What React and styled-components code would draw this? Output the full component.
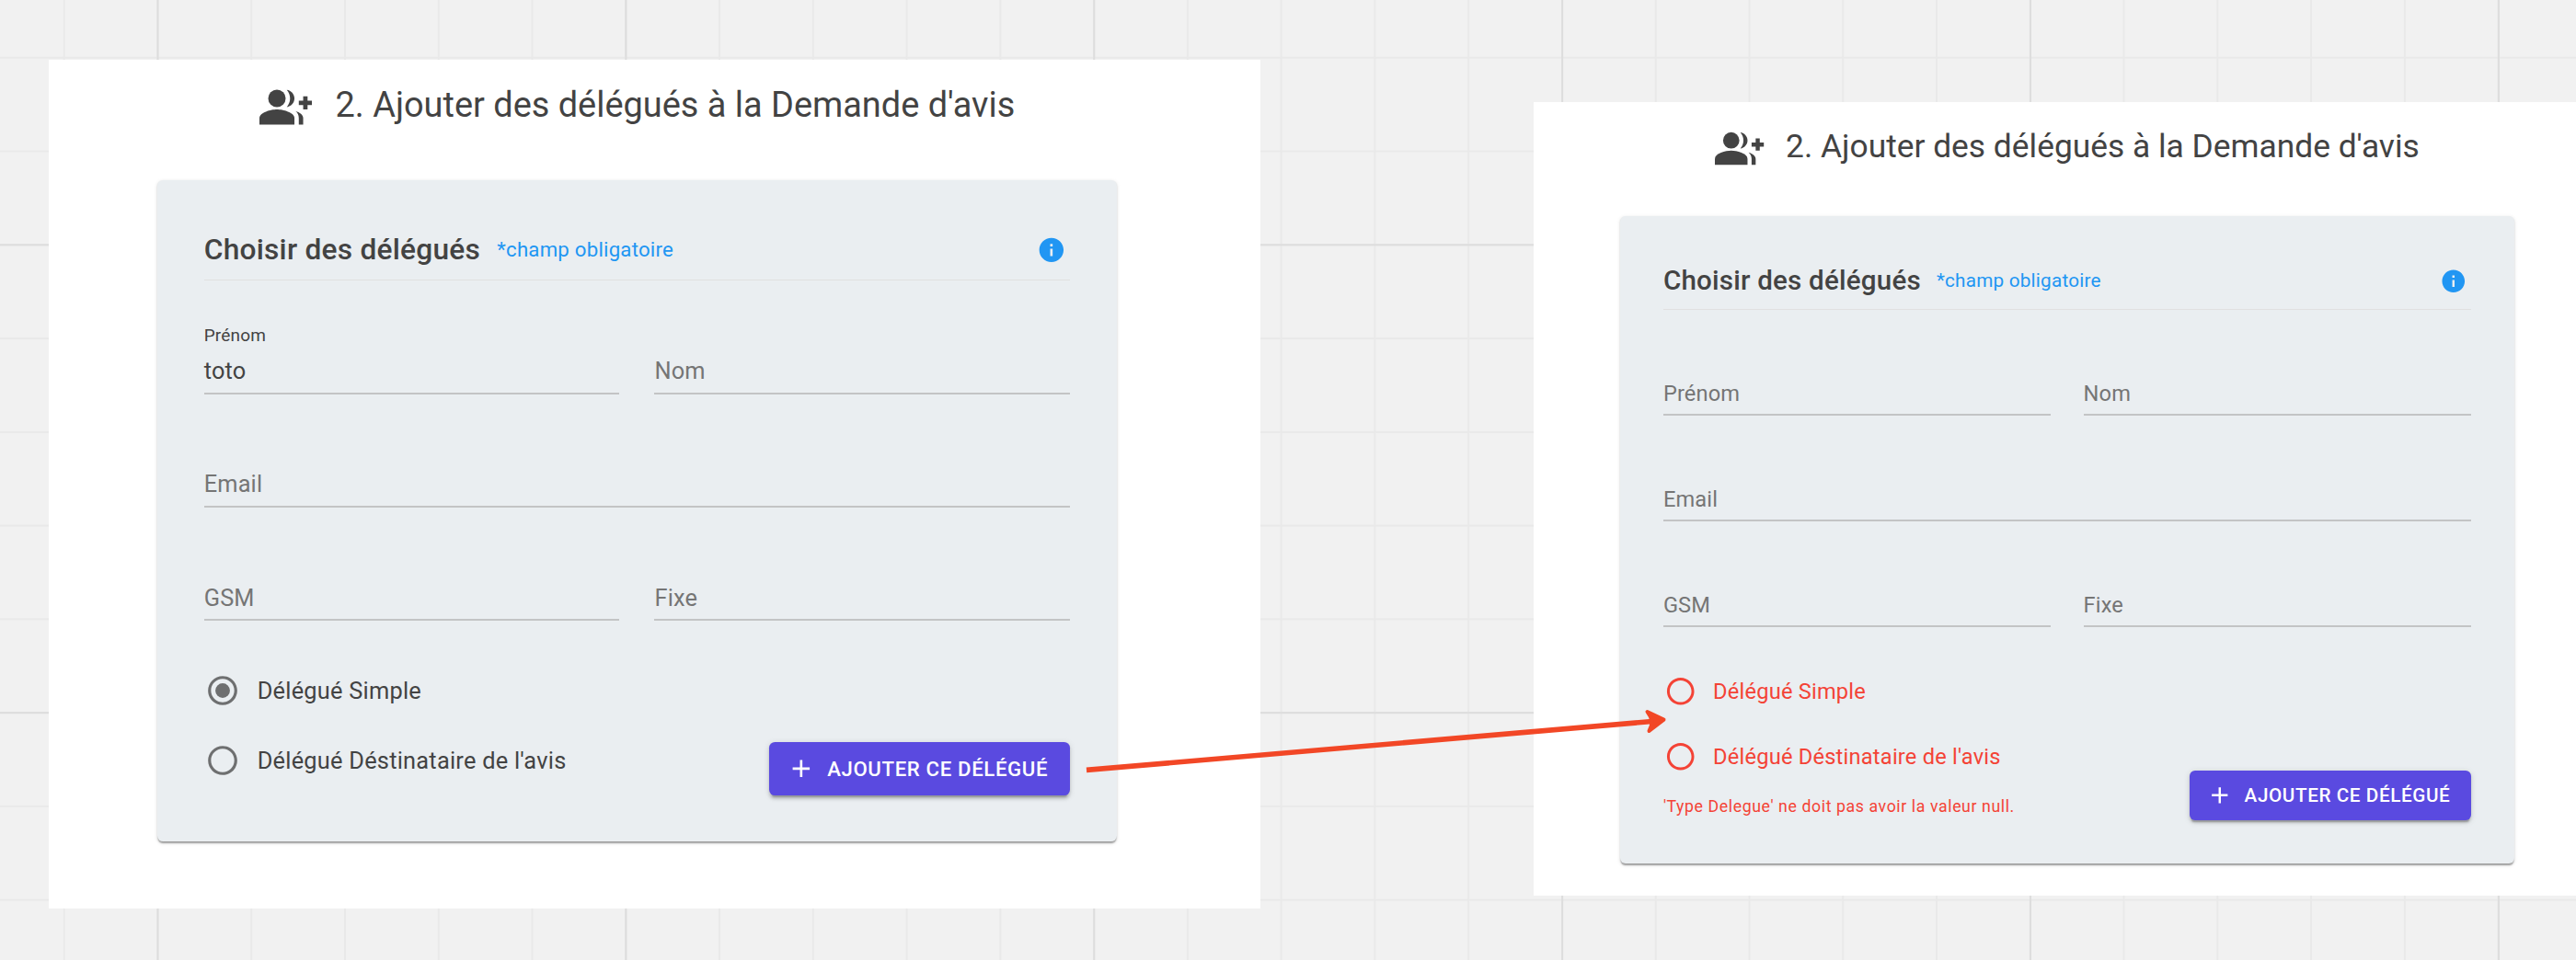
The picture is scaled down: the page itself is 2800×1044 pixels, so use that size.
import React from "react";
import styled, { createGlobalStyle, ThemeProvider, css } from "styled-components";

const u = (n) => ({ theme }) => `${(n * theme.unit).toFixed(3)}px`;

const GlobalStyle = createGlobalStyle`
  *, *::before, *::after { box-sizing: border-box; }
  html, body { margin: 0; padding: 0; }
  body {
    font-family: Roboto, "Liberation Sans", sans-serif;
    color: #434343;
    background: #f1f1f1;
    overflow: hidden;
  }
`;

const Board = styled.main`
  position: relative;
  display: flex;
  align-items: flex-start;
  width: 2800px;
  height: 1044px;
  overflow: hidden;
  background-color: #f1f1f1;
  background-image:
    linear-gradient(to right, #dddddd 2px, transparent 2px),
    linear-gradient(to bottom, #dddddd 2px, transparent 2px),
    linear-gradient(to right, #e9e9e9 2px, transparent 2px),
    linear-gradient(to bottom, #e9e9e9 2px, transparent 2px);
  background-size: 508.9px 508.9px, 508.9px 508.9px, 101.78px 101.78px, 101.78px 101.78px;
  background-position: 170.5px 0, 0 265.3px, 68.7px 0, 0 61.8px;
`;

const Panel = styled.section`
  flex: none;
  width: ${(p) => p.$width}px;
  height: ${(p) => p.$height}px;
  margin: ${(p) => p.$top}px 0 0 ${(p) => p.$gap}px;
  padding: ${(p) => p.$padTop}px 0 0 ${(p) => p.$padLeft}px;
  background: #ffffff;
`;

const TitleBar = styled.header`
  display: flex;
  align-items: flex-start;
  gap: ${u(15.8)};
  height: ${u(36)};
  margin: 0 0 ${u(32)} ${u(70.3)};
`;

const Title = styled.h1`
  margin: 0;
  font-size: ${u(23.92)};
  line-height: ${u(33)};
  font-weight: 400;
  white-space: nowrap;
`;

const Icon = styled.svg`
  flex: none;
  display: block;
  width: ${(p) => u(p.$size)};
  height: ${(p) => u(p.$size)};
  fill: currentColor;
`;

const Card = styled.div`
  width: ${u(658)};
  padding: ${u(32)};
  border-radius: ${u(4)};
  background: #eaeef1;
  box-shadow:
    0 ${u(2)} ${u(1)} ${u(-1)} rgba(0, 0, 0, 0.2),
    0 ${u(1)} ${u(1)} 0 rgba(0, 0, 0, 0.14),
    0 ${u(1)} ${u(3)} 0 rgba(0, 0, 0, 0.12);
`;

const CardHeader = styled.div`
  display: flex;
  align-items: center;
  height: ${u(36.6)};
  padding-bottom: ${u(4.2)};
  margin-bottom: ${u(30.1)};
  border-bottom: ${u(1)} solid #e0e0e0;
`;

const CardTitle = styled.h2`
  margin: 0 ${u(11.5)} 0 0;
  font-size: ${u(20)};
  line-height: ${u(31)};
  font-weight: 500;
  letter-spacing: 0.0075em;
`;

const Required = styled.span`
  font-size: ${u(14)};
  line-height: ${u(31)};
  letter-spacing: 0.01071em;
  color: #2196f3;
`;

const InfoMark = styled.span`
  margin: 0 ${u(3)} 0 auto;
  color: #2196f3;
`;

const FieldRow = styled.div`
  display: grid;
  grid-template-columns: repeat(${(p) => p.$columns}, 1fr);
  column-gap: ${u(24)};
  margin-bottom: ${(p) => u(p.$last ? 23.5 : 29.8)};
`;

const FieldBox = styled.div`
  height: ${u(48)};
  border-bottom: 2px solid #c3c4c5;
  letter-spacing: 0.00938em;
`;

const FieldLabel = styled.div`
  height: ${u(16)};
  font-size: ${u(12)};
  line-height: ${u(15.4)};
`;

const FieldValue = styled.div`
  height: ${u(30)};
  font-size: ${u(16)};
  line-height: ${u(32.4)};
  color: ${(p) => (p.$empty ? "#757575" : "#434343")};
`;

const Footer = styled.div`
  display: flex;
  align-items: flex-end;
  justify-content: space-between;
`;

const RadioRow = styled.div`
  display: flex;
  align-items: center;
  gap: ${u(11.8)};
  height: ${u(48)};
  padding-left: ${u(0.8)};
  color: ${(p) => (p.$error ? "#f44336" : "#6e6f70")};
`;

const RadioText = styled.span`
  padding-top: ${u(1)};
  font-size: ${u(16)};
  line-height: ${u(24)};
  letter-spacing: 0.00938em;
  ${(p) => !p.$error && css`color: #434343;`}
`;

const ErrorText = styled.p`
  margin: ${u(2)} 0 0;
  font-size: ${u(12)};
  line-height: ${u(20.4)};
  letter-spacing: 0.03333em;
  color: #f44336;
`;

const AddButton = styled.button`
  display: flex;
  align-items: center;
  gap: ${u(8)};
  width: ${u(206.6)};
  height: ${u(36.2)};
  padding: 0 0 0 ${u(12)};
  border: 0;
  border-radius: ${u(4)};
  background: #5a4ae0;
  color: #ffffff;
  font: 500 ${u(14)} Roboto, "Liberation Sans", sans-serif;
  letter-spacing: 0.02857em;
  white-space: nowrap;
  box-shadow:
    0 ${u(3)} ${u(1)} ${u(-2)} rgba(0, 0, 0, 0.2),
    0 ${u(2)} ${u(2)} 0 rgba(0, 0, 0, 0.14),
    0 ${u(1)} ${u(5)} 0 rgba(0, 0, 0, 0.12);
`;

const Connector = styled.svg`
  position: absolute;
  left: 0;
  top: 0;
  pointer-events: none;
`;

const RING =
  "M12 2C6.48 2 2 6.48 2 12s4.48 10 10 10 10-4.48 10-10S17.52 2 12 2zm0 18c-4.42 0-8-3.58-8-8s3.58-8 8-8 8 3.58 8 8-3.58 8-8 8z";

const GroupAddIcon = () => (
  <Icon $size={36} viewBox="0 0 24 24">
    <path d="M22 9V7h-2v2h-2v2h2v2h2v-2h2V9z" />
    <circle cx="8" cy="8" r="4" />
    <path d="M8 13c-2.67 0-8 1.34-8 4v3h16v-3c0-2.66-5.33-4-8-4z" />
    <path d="M12.51 4.05C13.43 5.11 14 6.49 14 8s-.57 2.89-1.49 3.95C14.47 11.7 16 10.04 16 8s-1.53-3.7-3.49-3.95z" />
    <path d="M16.53 13.83C17.42 14.66 18 15.7 18 17v3h2v-3c0-1.45-1.59-2.51-3.47-3.17z" />
  </Icon>
);

const Field = ({ label, value }) => (
  <FieldBox>
    <FieldLabel>{value ? label : null}</FieldLabel>
    <FieldValue $empty={!value}>{value || label}</FieldValue>
  </FieldBox>
);

const Radio = ({ label, checked, error }) => (
  <RadioRow $error={error}>
    <Icon $size={24} viewBox="0 0 24 24">
      <path d={RING} />
      {checked && <circle cx="12" cy="12" r="5" />}
    </Icon>
    <RadioText $error={error}>{label}</RadioText>
  </RadioRow>
);

const DelegateForm = ({ unit, frame, firstName, simpleChecked, error }) => (
  <ThemeProvider theme={{ unit }}>
    <Panel {...frame}>
      <TitleBar>
        <GroupAddIcon />
        <Title>2. Ajouter des délégués à la Demande d'avis</Title>
      </TitleBar>
      <Card>
        <CardHeader>
          <CardTitle>Choisir des délégués</CardTitle>
          <Required>*champ obligatoire</Required>
          <InfoMark>
            <Icon $size={20} viewBox="0 0 24 24">
              <path d="M12 2C6.48 2 2 6.48 2 12s4.48 10 10 10 10-4.48 10-10S17.52 2 12 2zm1 15h-2v-6h2v6zm0-8h-2V7h2v2z" />
            </Icon>
          </InfoMark>
        </CardHeader>
        <FieldRow $columns={2}>
          <Field label="Prénom" value={firstName} />
          <Field label="Nom" />
        </FieldRow>
        <FieldRow $columns={1}>
          <Field label="Email" />
        </FieldRow>
        <FieldRow $columns={2} $last>
          <Field label="GSM" />
          <Field label="Fixe" />
        </FieldRow>
        <Footer>
          <div>
            <Radio label="Délégué Simple" checked={simpleChecked} error={!!error} />
            <Radio label="Délégué Déstinataire de l'avis" error={!!error} />
            {error && <ErrorText>{error}</ErrorText>}
          </div>
          <AddButton type="button">
            <Icon $size={20} viewBox="0 0 24 24">
              <path d="M19 13h-6v6h-2v-6H5v-2h6V5h2v6h6v2z" />
            </Icon>
            AJOUTER CE DÉLÉGUÉ
          </AddButton>
        </Footer>
      </Card>
    </Panel>
  </ThemeProvider>
);

export default function App() {
  return (
    <>
      <GlobalStyle />
      <Board>
        <DelegateForm
          unit={1.585}
          frame={{ $width: 1317, $height: 923, $top: 65, $gap: 53, $padTop: 23.4, $padLeft: 118 }}
          firstName="toto"
          simpleChecked
        />
        <DelegateForm
          unit={1.478}
          frame={{ $width: 1133, $height: 863, $top: 111, $gap: 297, $padTop: 23.8, $padLeft: 93.6 }}
          error="'Type Delegue' ne doit pas avoir la valeur null."
        />
        <Connector width="2800" height="1044" viewBox="0 0 2800 1044" fill="#f24726">
          <path d="M1181 837.4L1796 784.5" stroke="#f24726" strokeWidth="5.6" />
          <path
            d="M1790.5 774L1808.5 782.6L1792.5 795Q1795.5 789 1795.5 784.5Q1794.5 779 1790.5 774Z"
            stroke="#f24726"
            strokeWidth="4"
            strokeLinejoin="round"
          />
        </Connector>
      </Board>
    </>
  );
}
